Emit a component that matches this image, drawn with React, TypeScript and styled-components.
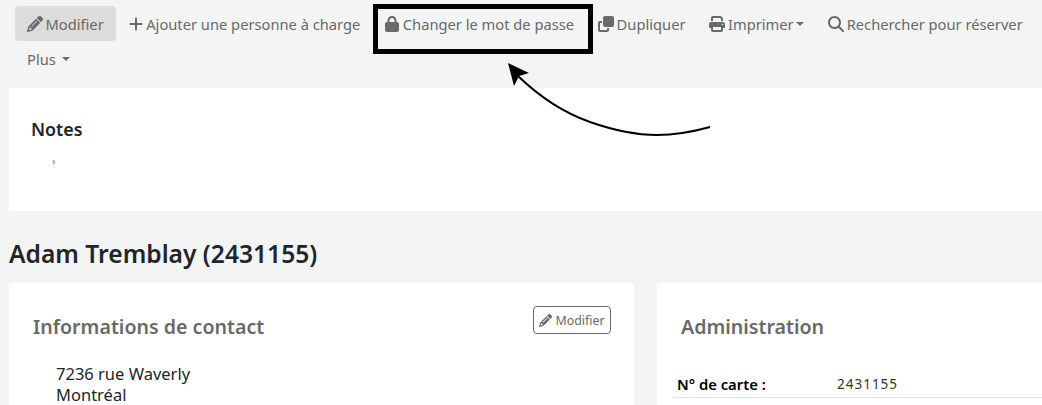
import styled, { createGlobalStyle } from "styled-components";
import { ReactNode } from "react";
import { FaPencil, FaPlus, FaLock, FaClone, FaPrint, FaMagnifyingGlass } from "react-icons/fa6";

const GlobalStyle = createGlobalStyle`
  html, body {
    margin: 0;
    padding: 0;
    background: #f3f4f4;
    overflow: hidden;
  }
  body {
    font-family: "Noto Sans", "Open Sans", sans-serif;
    color: #212529;
  }
`;

const Page = styled.div`
  position: relative;
  width: 1042px;
  height: 405px;
  overflow: hidden;
`;

const Toolbar = styled.div`
  display: flex;
  flex-wrap: wrap;
  align-content: flex-start;
  padding: 6px 0 0 15px;
  height: 88px;
  box-sizing: border-box;
`;

const ToolButton = styled.div<{ $active?: boolean }>`
  display: flex;
  align-items: center;
  gap: 2.5px;
  height: 35px;
  padding: 0 12px;
  border-radius: 4px;
  font-size: 14.7px;
  white-space: nowrap;
  color: #696969;
  background: ${(props) => (props.$active ? "#dcdcdc" : "transparent")};

  svg {
    width: auto;
    height: 16px;
    flex-shrink: 0;
  }
`;

const Caret = styled.span<{ $offset?: number }>`
  display: inline-block;
  margin-left: ${(props) => props.$offset ?? 0}px;
  border-top: 4px solid #696969;
  border-left: 4px solid transparent;
  border-right: 4px solid transparent;
`;

const NotesPanel = styled.section`
  margin-left: 9px;
  height: 123px;
  background: #fff;
  padding: 30px 22px 0;
  box-sizing: border-box;
`;

const NotesTitle = styled.h3`
  margin: 0;
  font-size: 17.8px;
  line-height: 22px;
  font-weight: 600;
  color: #212529;
`;

const NotesItem = styled.div`
  margin: 12px 0 0 21px;
  font-size: 11px;
  line-height: 18px;
  color: #777;
`;

const PatronName = styled.h1`
  margin: 0;
  padding: 26px 0 0 9px;
  height: 72px;
  box-sizing: border-box;
  font-size: 24.6px;
  line-height: 34px;
  font-weight: 600;
  color: #212529;
`;

const Columns = styled.div`
  display: flex;
  gap: 23px;
  margin-left: 9px;
`;

const Card = styled.section<{ $width: number }>`
  position: relative;
  flex: 0 0 ${(props) => props.$width}px;
  height: 122px;
  background: #fff;
  padding: 31px 0 0 24px;
  box-sizing: border-box;
`;

const CardTitle = styled.h3`
  margin: 0;
  font-size: 19.6px;
  line-height: 26px;
  font-weight: 600;
  color: #696969;
`;

const SmallButton = styled.div`
  position: absolute;
  top: 23px;
  right: 23px;
  display: flex;
  align-items: center;
  justify-content: center;
  gap: 3px;
  width: 78px;
  height: 28px;
  box-sizing: border-box;
  border: 1px solid #696969;
  border-radius: 4px;
  font-size: 12.4px;
  color: #696969;

  svg {
    width: auto;
    height: 13px;
  }
`;

const Address = styled.div`
  margin: 23px 0 0 23px;
  font-size: 16.5px;
  line-height: 21px;
  color: #212529;
`;

const InfoRow = styled.div`
  display: flex;
  align-items: center;
  margin: 29px 0 0 -8px;
  height: 29px;
  padding: 2px 0 0 4px;
  box-sizing: border-box;
  border-bottom: 1px solid #e6e6e6;
  font-size: 14.8px;
`;

const InfoLabel = styled.span`
  flex: 0 0 160px;
  font-weight: 600;
  color: #000;
`;

const InfoValue = styled.span`
  font-size: 13.5px;
  letter-spacing: 1px;
  color: #333;
`;

const Annotation = styled.svg`
  position: absolute;
  inset: 0;
  pointer-events: none;
`;

const ToolItem = ({ icon, children, active }: { icon?: ReactNode; children: ReactNode; active?: boolean }) => (
  <ToolButton $active={active}>
    {icon}
    {children}
  </ToolButton>
);

export default function App() {
  return (
    <Page>
      <GlobalStyle />
      <Toolbar>
        <ToolItem active icon={<FaPencil />}>Modifier</ToolItem>
        <ToolItem icon={<FaPlus />}>Ajouter une personne à charge</ToolItem>
        <ToolItem icon={<FaLock />}>Changer le mot de passe</ToolItem>
        <ToolItem icon={<FaClone />}>Dupliquer</ToolItem>
        <ToolItem icon={<FaPrint />}>
          Imprimer
          <Caret />
        </ToolItem>
        <ToolItem icon={<FaMagnifyingGlass />}>Rechercher pour réserver</ToolItem>
        <ToolItem>
          Plus
          <Caret $offset={4} />
        </ToolItem>
      </Toolbar>

      <NotesPanel>
        <NotesTitle>Notes</NotesTitle>
        <NotesItem>›</NotesItem>
      </NotesPanel>

      <PatronName>Adam Tremblay (2431155)</PatronName>

      <Columns>
        <Card $width={625}>
          <CardTitle>Informations de contact</CardTitle>
          <SmallButton>
            <FaPencil />
            Modifier
          </SmallButton>
          <Address>
            7236 rue Waverly
            <br />
            Montréal
          </Address>
        </Card>
        <Card $width={385}>
          <CardTitle>Administration</CardTitle>
          <InfoRow>
            <InfoLabel>N° de carte :</InfoLabel>
            <InfoValue>2431155</InfoValue>
          </InfoRow>
        </Card>
      </Columns>

      {/* annotation drawn over the screenshot */}
      <Annotation width={1042} height={405} viewBox="0 0 1042 405">
        <rect x={375.5} y={6.5} width={215} height={45} fill="none" stroke="#000" strokeWidth={5} />
        <path d="M710 127 C692 132 675 135 657 135 C632 135 610 129 590 122 C570 115 545 102 518 76" fill="none" stroke="#000" strokeWidth={2} />
        <path d="M508 63 L529 73 L519 76 L514 86 Z" fill="#000" />
      </Annotation>
    </Page>
  );
}
